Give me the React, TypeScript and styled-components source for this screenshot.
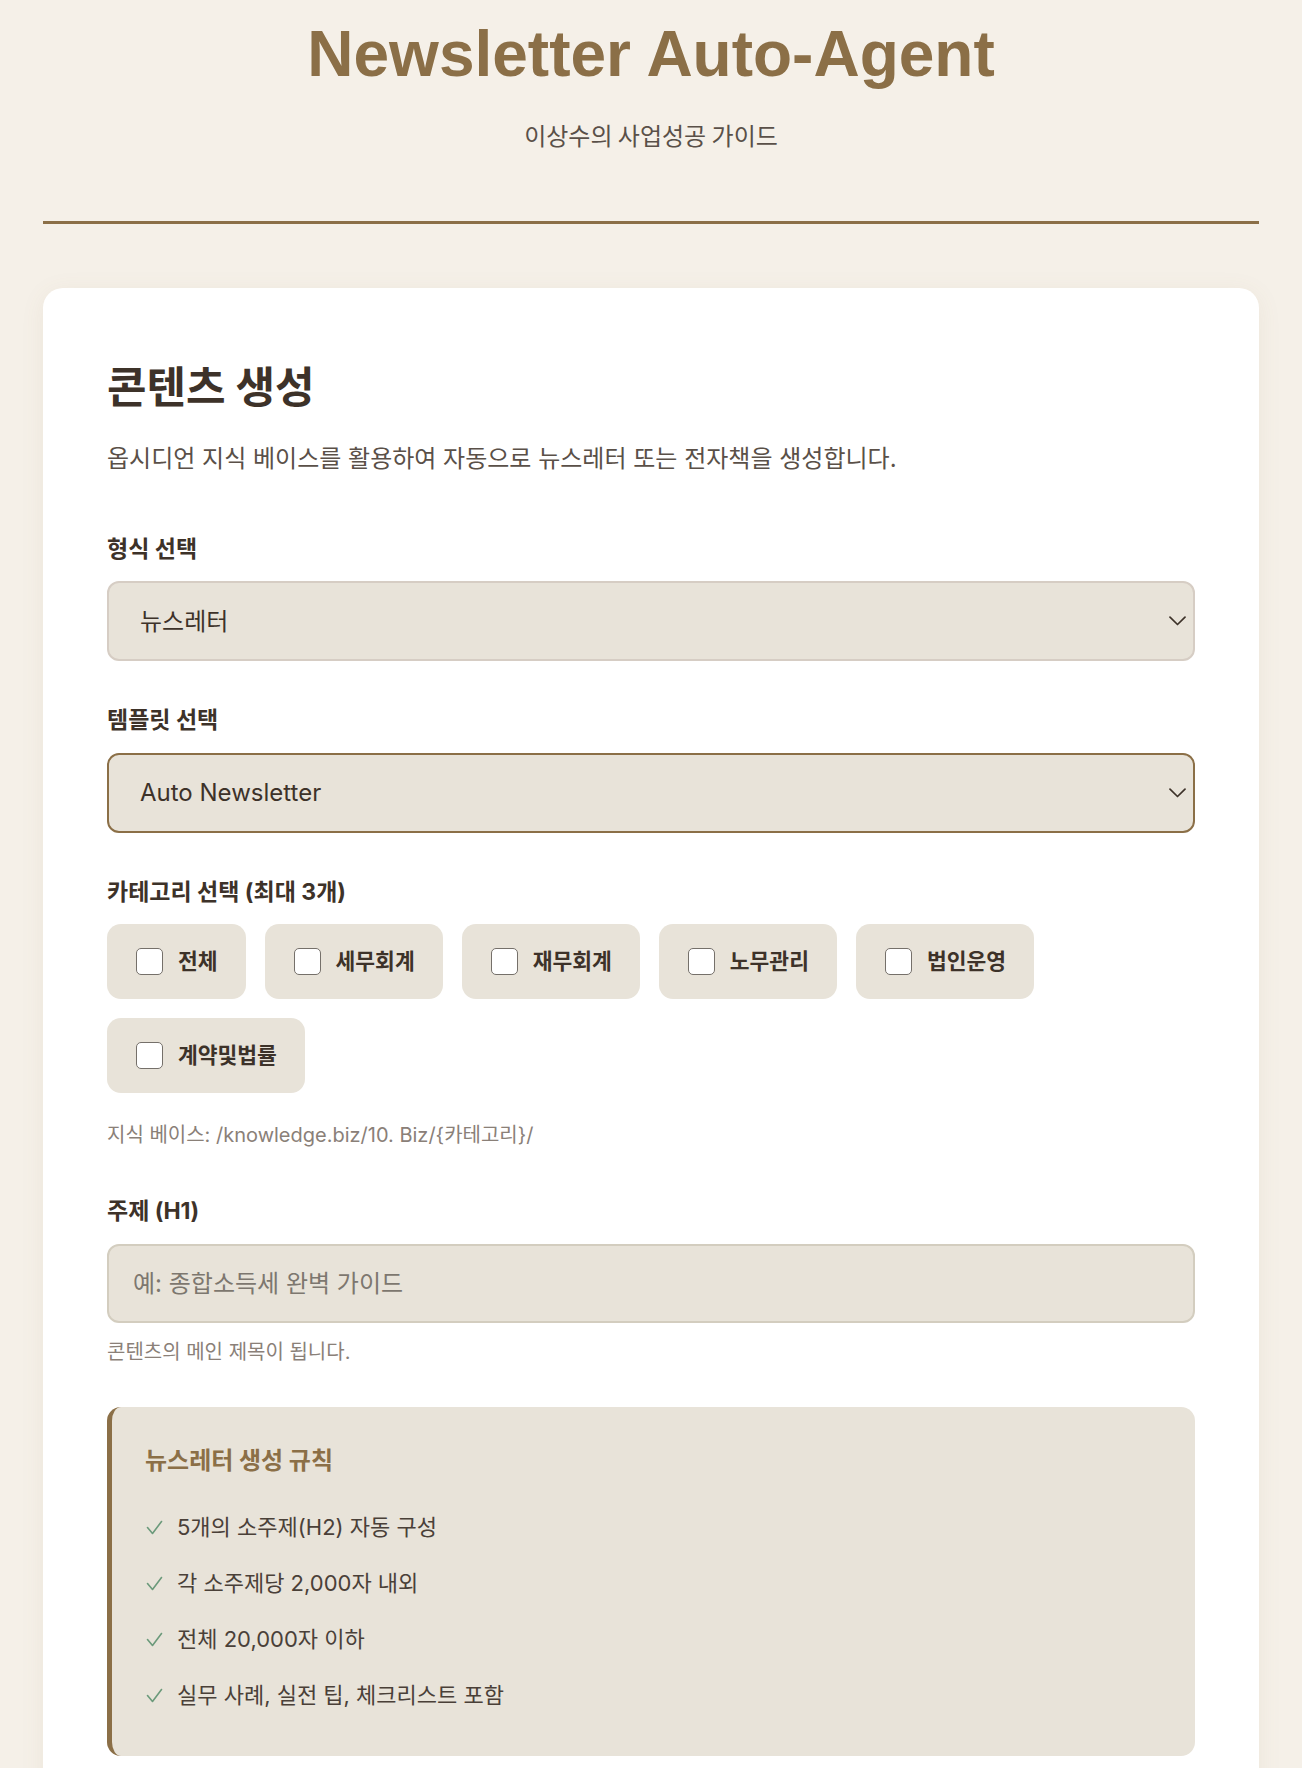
import React from "react";
import styled, { createGlobalStyle } from "styled-components";

const GlobalStyle = createGlobalStyle`
  html, body { margin: 0; padding: 0; }
  body {
    background: #f5f0e8;
    font-family: "Inter", "Noto Sans CJK KR", sans-serif;
    color: #3d3229;
  }
  * { box-sizing: border-box; }
`;

const Page = styled.div`
  max-width: 1280px;
  margin: 0 auto;
  padding: 0 32px;
`;

const Header = styled.header`
  text-align: center;
  padding: 16px 0 68px;
  border-bottom: 3px solid #8b6f47;
  margin-bottom: 64px;
`;

const Title = styled.h1`
  margin: 0;
  font-family: "Liberation Sans", Arial, sans-serif;
  font-weight: 700;
  font-size: 64px;
  line-height: 1.2;
  color: #8b6f47;
`;

const Subtitle = styled.p`
  margin: 24px 0 0;
  font-family: "Noto Sans CJK KR", sans-serif;
  font-size: 24px;
  line-height: 1.5;
  color: #5a5048;
`;

const Card = styled.section`
  background: #ffffff;
  border-radius: 20px;
  padding: 71px 64px 64px;
  box-shadow: 0 4px 24px rgba(139, 111, 71, 0.08);
`;

const CardTitle = styled.h2`
  margin: 0 0 30px;
  font-family: "Noto Sans CJK KR", sans-serif;
  font-size: 43px;
  font-weight: 700;
  line-height: 1.2;
  color: #3d3229;
`;

const Description = styled.p`
  margin: 0 0 53px;
  font-size: 24px;
  line-height: 1.6;
  color: #5a5048;
`;

const FormGroup = styled.div<{ $gap?: number }>`
  margin-bottom: ${(p) => (p.$gap ?? 42)}px;
`;

const Label = styled.label`
  display: block;
  margin-bottom: 15px;
  font-size: 23px;
  font-weight: 700;
  line-height: 1.5;
  color: #3d3229;
`;

const SelectWrap = styled.div`
  position: relative;
`;

const Select = styled.select<{ $active?: boolean }>`
  display: block;
  width: 100%;
  height: 80px;
  padding: 0 56px 0 31px;
  border: 2px solid ${(p) => (p.$active ? "#8b6f47" : "#d6cdc4")};
  border-radius: 12px;
  background: #e8e3d9;
  font-family: "Inter", "Noto Sans CJK KR", sans-serif;
  font-size: 24px;
  color: #3d3229;
  appearance: none;
  -webkit-appearance: none;
  outline: none;
`;

const Chevron = styled.svg`
  position: absolute;
  right: 9px;
  top: 50%;
  width: 17px;
  height: 10px;
  margin-top: -5px;
  pointer-events: none;
`;

const ChipRow = styled.div`
  display: flex;
  flex-wrap: wrap;
  gap: 19px 19px;
`;

const Chip = styled.label`
  display: inline-flex;
  align-items: center;
  gap: 15px;
  padding: 24px 28px 24px 29px;
  background: #e8e3d9;
  border-radius: 14px;
  font-size: 21.5px;
  font-weight: 700;
  line-height: 27px;
  color: #3d3229;
  cursor: pointer;
`;

const Box = styled.input`
  appearance: none;
  -webkit-appearance: none;
  margin: 0;
  width: 27px;
  height: 27px;
  border: 1.5px solid #75706a;
  border-radius: 5px;
  background: #ffffff;
  flex-shrink: 0;
`;

const Hint = styled.p<{ $top: number }>`
  margin: ${(p) => p.$top}px 0 0;
  font-size: 20px;
  line-height: 1.5;
  color: #8a8078;
`;

const TextInput = styled.input`
  display: block;
  width: 100%;
  height: 79px;
  padding: 0 24px;
  border: 2px solid #d3cdbf;
  border-radius: 12px;
  background: #e8e3d9;
  font-family: "Inter", "Noto Sans CJK KR", sans-serif;
  font-size: 24px;
  color: #3d3229;
  outline: none;
  &::placeholder {
    color: #7d776f;
  }
`;

const RulesBox = styled.div`
  background: #e8e3d9;
  border-left: 5px solid #8b6f47;
  border-radius: 14px;
  padding: 37px 32px 33px 33px;
`;

const RulesTitle = styled.h3`
  margin: 0 0 22px;
  font-size: 24px;
  font-weight: 700;
  line-height: 1.4;
  color: #8b6f47;
`;

const RulesList = styled.ul`
  list-style: none;
  margin: 0;
  padding: 0;
`;

const RuleItem = styled.li`
  display: flex;
  align-items: center;
  gap: 14px;
  padding: 12px 0;
  font-size: 22px;
  line-height: 32px;
  color: #4a4038;
`;

const CheckMark = styled.svg`
  width: 17px;
  height: 15px;
  flex-shrink: 0;
  margin-left: 1px;
`;

const categories = ["전체", "세무회계", "재무회계", "노무관리", "법인운영", "계약및법률"];

const rules = [
  "5개의 소주제(H2) 자동 구성",
  "각 소주제당 2,000자 내외",
  "전체 20,000자 이하",
  "실무 사례, 실전 팁, 체크리스트 포함",
];

const ChevronIcon = () => (
  <Chevron viewBox="0 0 17 10" fill="none">
    <path d="M1 1.2 L8.5 8.5 L16 1.2" stroke="#3d3229" strokeWidth="1.7" strokeLinecap="round" strokeLinejoin="round" />
  </Chevron>
);

const CheckIcon = () => (
  <CheckMark viewBox="0 0 17 15" fill="none">
    <path d="M1.5 7.5 L6.5 13.5 L15.5 1.5" stroke="#6b9a7b" strokeWidth="1.6" strokeLinecap="round" strokeLinejoin="round" />
  </CheckMark>
);

export default function App() {
  return (
    <>
      <GlobalStyle />
      <Page>
        <Header>
          <Title>Newsletter Auto-Agent</Title>
          <Subtitle>이상수의 사업성공 가이드</Subtitle>
        </Header>

        <Card>
          <CardTitle>콘텐츠 생성</CardTitle>
          <Description>
            옵시디언 지식 베이스를 활용하여 자동으로 뉴스레터 또는 전자책을 생성합니다.
          </Description>

          <FormGroup>
            <Label>형식 선택</Label>
            <SelectWrap>
              <Select defaultValue="newsletter">
                <option value="newsletter">뉴스레터</option>
                <option value="ebook">전자책</option>
              </Select>
              <ChevronIcon />
            </SelectWrap>
          </FormGroup>

          <FormGroup>
            <Label>템플릿 선택</Label>
            <SelectWrap>
              <Select $active defaultValue="auto">
                <option value="auto">Auto Newsletter</option>
              </Select>
              <ChevronIcon />
            </SelectWrap>
          </FormGroup>

          <FormGroup $gap={44}>
            <Label>카테고리 선택 (최대 3개)</Label>
            <ChipRow>
              {categories.map((c) => (
                <Chip key={c}>
                  <Box type="checkbox" />
                  {c}
                </Chip>
              ))}
            </ChipRow>
            <Hint $top={27}>지식 베이스: /knowledge.biz/10. Biz/{"{카테고리}"}/</Hint>
          </FormGroup>

          <FormGroup $gap={40}>
            <Label>주제 (H1)</Label>
            <TextInput type="text" placeholder="예: 종합소득세 완벽 가이드" />
            <Hint $top={14}>콘텐츠의 메인 제목이 됩니다.</Hint>
          </FormGroup>

          <RulesBox>
            <RulesTitle>뉴스레터 생성 규칙</RulesTitle>
            <RulesList>
              {rules.map((r) => (
                <RuleItem key={r}>
                  <CheckIcon />
                  {r}
                </RuleItem>
              ))}
            </RulesList>
          </RulesBox>
        </Card>
      </Page>
    </>
  );
}
